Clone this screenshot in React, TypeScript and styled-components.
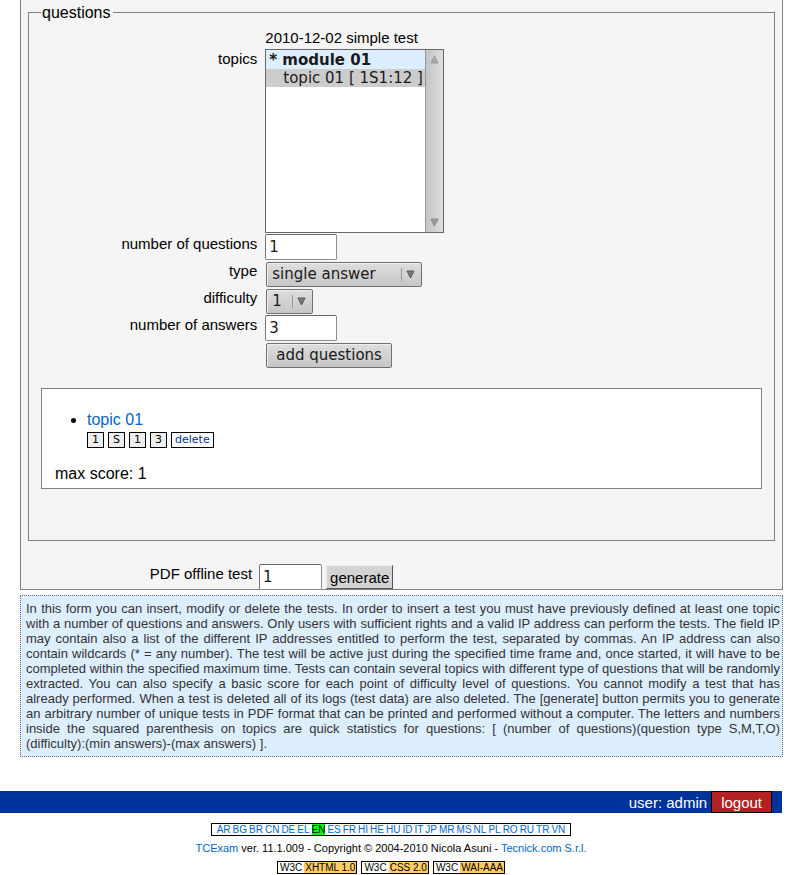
import React from "react";
import styled, { createGlobalStyle } from "styled-components";

const GlobalStyle = createGlobalStyle`
  *, *::before, *::after { box-sizing: border-box; }
  body {
    margin: 0;
    background: #ffffff;
    color: #000000;
    font-family: "Liberation Sans", Arial, Helvetica, sans-serif;
    font-size: 15px;
  }
  a { color: #0066cc; text-decoration: none; }
`;

const Content = styled.main`
  padding: 0 6px 0 20px;
`;

const FormPanel = styled.form`
  background: #f5f5f5;
  border: 1px solid #808080;
  border-top: 0;
  padding: 3px 7px 0;
`;

const Questions = styled.fieldset`
  min-width: 0;
  margin: 0;
  padding: 9px 12px 51px;
  border: 1px solid #808080;
`;

const Legend = styled.legend`
  margin: 0;
  padding: 1px 2px 0 1px;
  font-size: 16px;
  line-height: 17px;
`;

const Row = styled.div<{ $height?: number }>`
  display: grid;
  grid-template-columns: 30% 1fr;
  column-gap: 8px;
  align-items: start;
  min-height: ${(p) => p.$height ?? 27}px;
`;

const Label = styled.label`
  text-align: right;
  line-height: 19px;
`;

const Field = styled.div<{ $inset?: boolean }>`
  grid-column: 2;
  display: flex;
  padding: ${(p) => (p.$inset ? "1px 0 0 1px" : "0")};
`;

const TestName = styled.span`
  line-height: 15px;
`;

const ListBox = styled.div`
  display: flex;
  width: 179px;
  height: 184px;
  border: 1px solid #666666;
  background: #ffffff;
`;

const TopicList = styled.select`
  appearance: none;
  flex: 1;
  min-width: 0;
  height: 100%;
  margin: 0;
  padding: 0;
  border: 0;
  border-radius: 0;
  outline: 0;
  overflow: hidden;
  background: #ffffff;
  font: 15px "DejaVu Sans", sans-serif;
`;

const TopicOption = styled.option<{ $module?: boolean }>`
  min-height: 18px;
  height: ${(p) => (p.$module ? 19 : 18)}px;
  padding: ${(p) => (p.$module ? "1px 3px 0" : "0 0 0 17px")};
  line-height: 18px;
  color: #1a1a1a;
  font-weight: ${(p) => (p.$module ? "bold" : "normal")};
  background: ${(p) => (p.$module ? "#ddeeff" : "#cccccc")};
`;

const ScrollTrack = styled.div`
  display: flex;
  flex-direction: column;
  justify-content: space-between;
  align-items: center;
  width: 18px;
  padding: 5px 0;
  border-left: 1px solid #999999;
  background: linear-gradient(to right, #c4c4c4, #dedede);
`;

const TextInput = styled.input<{ $width: number }>`
  width: ${(p) => p.$width}px;
  height: 26px;
  margin: 0;
  padding: 0 3px 1px;
  border: 1px solid #8c8c8c;
  border-top-color: #666666;
  border-left-color: #777777;
  border-radius: 2px;
  background: #ffffff;
  color: #1a1a1a;
  font: 15px "DejaVu Sans", sans-serif;
`;

const SelectFrame = styled.div<{ $width: number }>`
  position: relative;
  width: ${(p) => p.$width}px;
  height: 25px;
`;

const DropDown = styled.select`
  appearance: none;
  width: 100%;
  height: 100%;
  margin: 0;
  padding: 0 24px 2px 5px;
  border: 1px solid #707070;
  border-radius: 2px;
  background: linear-gradient(#dedede, #c6c6c6);
  box-shadow: inset 1px 1px 0 #eeeeee;
  color: #1a1a1a;
  font: 15px "DejaVu Sans", sans-serif;
`;

const DropMark = styled.span`
  position: absolute;
  top: 6px;
  right: 7px;
  display: flex;
  align-items: center;
  height: 13px;
  padding-left: 4px;
  border-left: 1px solid #999999;
  pointer-events: none;
`;

const SoftButton = styled.button`
  height: 25px;
  margin: 0;
  padding: 0 9px 2px;
  border: 1px solid #707070;
  border-radius: 2px;
  background: linear-gradient(#dedede, #c6c6c6);
  box-shadow: inset 1px 1px 0 #eeeeee;
  color: #1a1a1a;
  font: 15px "DejaVu Sans", sans-serif;
`;

const RaisedButton = styled.button`
  height: 24px;
  margin: 1px 0 0;
  padding: 0 3px;
  border: 1px solid;
  border-color: #eeeeee #555555 #555555 #eeeeee;
  background: #d3d3d3;
  color: #000000;
  font: 15px "Liberation Sans", Arial, sans-serif;
`;

const Summary = styled.section`
  margin-top: 19px;
  padding: 21px 13px 4px;
  border: 1px solid #808080;
  background: #ffffff;
  font-size: 16px;
  line-height: 20px;
`;

const TopicItems = styled.ul`
  margin: 0 0 16px;
  padding: 0 0 0 32px;
`;

const Stats = styled.div`
  display: flex;
  gap: 4px;
  margin-top: 2px;
`;

const Tag = styled.span`
  width: 17px;
  height: 16px;
  border: 1px solid #000000;
  background: #eeeeee;
  text-align: center;
  font: 11px/14px "DejaVu Sans", sans-serif;
`;

const DeleteLink = styled.a`
  height: 16px;
  padding: 0 3px;
  border: 1px solid #000000;
  background: #ffffff;
  color: #003399;
  font: 11px/14px "DejaVu Sans", sans-serif;
`;

const OfflineRow = styled.div`
  display: grid;
  grid-template-columns: 30% auto auto;
  justify-content: start;
  align-items: start;
  height: 25px;
  margin-top: 23px;
`;

const OfflineInput = styled(TextInput)`
  margin: 0 4px 0 7px;
`;

const Help = styled.p`
  margin: 5px 0 34px;
  padding: 5px 2px 5px 5px;
  border: 1px dotted #666677;
  background: #ddeeff;
  color: #333333;
  font-size: 13px;
  line-height: 15px;
  text-align: justify;
`;

const UserBar = styled.div`
  display: flex;
  justify-content: flex-end;
  align-items: center;
  gap: 4px;
  height: 22px;
  margin-right: 7px;
  padding-right: 10px;
  background: #003399;
  color: #ffffff;
`;

const Logout = styled.a`
  height: 22px;
  padding: 0 9px;
  border: 1px solid #000000;
  background: #b22222;
  color: #ffffff;
  line-height: 21px;
`;

const Footer = styled.footer`
  display: flex;
  flex-direction: column;
  align-items: center;
  margin-right: 7px;
  padding-top: 10px;
`;

const Languages = styled.nav`
  display: flex;
  gap: 2px;
  height: 13px;
  padding: 0 5px;
  border: 1px solid #000000;
  font-size: 10px;
  line-height: 12px;
`;

const Language = styled.a<{ $current?: boolean }>`
  color: ${(p) => (p.$current ? "#000000" : "#0066cc")};
  background: ${(p) => (p.$current ? "#00ff00" : "transparent")};
`;

const Copyright = styled.p`
  margin: 5px 0 6px;
  font-size: 11px;
  line-height: 14px;
`;

const Standards = styled.div`
  display: flex;
  gap: 4px;
`;

const Standard = styled.a`
  display: flex;
  height: 13px;
  border: 1px solid #000000;
  color: #000000;
  font-size: 10px;
  line-height: 12px;
`;

const StandardPart = styled.span<{ $accent?: boolean }>`
  padding: ${(p) => (p.$accent ? "0 1px" : "0 2px")};
  background: ${(p) => (p.$accent ? "#ffcc66" : "#ffffff")};
`;

const Triangle = ({ up, color }: { up?: boolean; color: string }) => (
  <svg width="9" height="9" viewBox="0 0 9 9" aria-hidden="true">
    <path
      d={up ? "M4.5 1 L8 8 H1 Z" : "M1 1 H8 L4.5 8 Z"}
      fill={color}
      fillOpacity="0.7"
      stroke={color}
      strokeWidth="1"
    />
  </svg>
);

const languages = "AR BG BR CN DE EL EN ES FR HI HE HU ID IT JP MR MS NL PL RO RU TR VN".split(" ");
const standards = ["XHTML 1.0", "CSS 2.0", "WAI-AAA"];
const stats = ["1", "S", "1", "3"];

const Choice = ({ id, width, children }: { id: string; width: number; children: React.ReactNode }) => (
  <SelectFrame $width={width}>
    <DropDown id={id}>{children}</DropDown>
    <DropMark>
      <Triangle color="#555555" />
    </DropMark>
  </SelectFrame>
);

export default function App() {
  return (
    <>
      <GlobalStyle />
      <Content>
        <FormPanel onSubmit={(e) => e.preventDefault()}>
          <Questions>
            <Legend>questions</Legend>
            <Row $height={19}>
              <Field>
                <TestName>2010-12-02 simple test</TestName>
              </Field>
            </Row>
            <Row $height={185}>
              <Label htmlFor="topics">topics</Label>
              <Field>
                <ListBox>
                  <TopicList id="topics" size={10} multiple>
                    <TopicOption $module>* module 01</TopicOption>
                    <TopicOption>topic 01 [ 1S1:12 ]</TopicOption>
                  </TopicList>
                  <ScrollTrack aria-hidden="true">
                    <Triangle up color="#999999" />
                    <Triangle color="#888888" />
                  </ScrollTrack>
                </ListBox>
              </Field>
            </Row>
            <Row>
              <Label htmlFor="count">number of questions</Label>
              <Field>
                <TextInput id="count" $width={72} defaultValue="1" />
              </Field>
            </Row>
            <Row>
              <Label htmlFor="type">type</Label>
              <Field $inset>
                <Choice id="type" width={156}>
                  <option>single answer</option>
                </Choice>
              </Field>
            </Row>
            <Row>
              <Label htmlFor="difficulty">difficulty</Label>
              <Field $inset>
                <Choice id="difficulty" width={47}>
                  <option>1</option>
                </Choice>
              </Field>
            </Row>
            <Row>
              <Label htmlFor="answers">number of answers</Label>
              <Field>
                <TextInput id="answers" $width={72} defaultValue="3" />
              </Field>
            </Row>
            <Row>
              <Field $inset>
                <SoftButton type="button">add questions</SoftButton>
              </Field>
            </Row>
            <Summary>
              <TopicItems>
                <li>
                  <a href="#topic">topic 01</a>
                  <Stats>
                    {stats.map((s, i) => (
                      <Tag key={i}>{s}</Tag>
                    ))}
                    <DeleteLink href="#delete">delete</DeleteLink>
                  </Stats>
                </li>
              </TopicItems>
              max score: 1
            </Summary>
          </Questions>
          <OfflineRow>
            <Label htmlFor="offline">PDF offline test</Label>
            <OfflineInput id="offline" $width={63} defaultValue="1" />
            <RaisedButton type="submit">generate</RaisedButton>
          </OfflineRow>
        </FormPanel>
        <Help>
          In this form you can insert, modify or delete the tests. In order to insert a test you must have
          previously defined at least one topic with a number of questions and answers. Only users with
          sufficient rights and a valid IP address can perform the tests. The field IP may contain also a list
          of the different IP addresses entitled to perform the test, separated by commas. An IP address can
          also contain wildcards (* = any number). The test will be active just during the specified time frame
          and, once started, it will have to be completed within the specified maximum time. Tests can contain
          several topics with different type of questions that will be randomly extracted. You can also specify
          a basic score for each point of difficulty level of questions. You cannot modify a test that has
          already performed. When a test is deleted all of its logs (test data) are also deleted. The
          [generate] button permits you to generate an arbitrary number of unique tests in PDF format that can
          be printed and performed without a computer. The letters and numbers inside the squared parenthesis
          on topics are quick statistics for questions: [ (number of questions)(question type S,M,T,O)
          (difficulty):(min answers)-(max answers) ].
        </Help>
      </Content>
      <UserBar>
        <span>user: admin</span>
        <Logout href="#logout">logout</Logout>
      </UserBar>
      <Footer>
        <Languages aria-label="Language">
          {languages.map((code) => (
            <Language key={code} href={`#${code}`} $current={code === "EN"}>
              {code}
            </Language>
          ))}
        </Languages>
        <Copyright>
          <a href="#tcexam">TCExam</a> ver. 11.1.009 - Copyright © 2004-2010 Nicola Asuni -{" "}
          <a href="#tecnick">Tecnick.com S.r.l.</a>
        </Copyright>
        <Standards>
          {standards.map((name) => (
            <Standard key={name} href="#w3c">
              <StandardPart>W3C</StandardPart>
              <StandardPart $accent>{name}</StandardPart>
            </Standard>
          ))}
        </Standards>
      </Footer>
    </>
  );
}
